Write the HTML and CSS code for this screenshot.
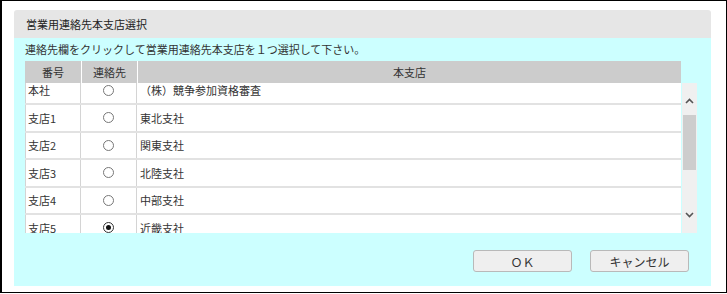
FILE: index.html
```html
<!DOCTYPE html>
<html lang="ja">

<head>
    <meta charset="UTF-8">
    <title>営業用連絡先本支店選択</title>
    <link rel="stylesheet" href="styles.css">
</head>

<body>
    <div class="frame">
        <div class="dialog">
            <div class="dialog-title">営業用連絡先本支店選択</div>
            <div class="dialog-body">
                <p class="hint">連絡先欄をクリックして営業用連絡先本支店を１つ選択して下さい。</p>

                <div class="grid-head">
                    <div class="c-no">番号</div>
                    <div class="c-sel">連絡先</div>
                    <div class="c-name">本支店</div>
                </div>

                <div class="grid-body">
                    <div class="grid-rows">
                        <div class="grid-scroll">
                            <div class="row">
                                <div class="c-no">本社</div>
                                <div class="c-sel"><span class="radio"></span></div>
                                <div class="c-name">（株）競争参加資格審査</div>
                            </div>
                            <div class="row">
                                <div class="c-no">支店1</div>
                                <div class="c-sel"><span class="radio"></span></div>
                                <div class="c-name">東北支社</div>
                            </div>
                            <div class="row">
                                <div class="c-no">支店2</div>
                                <div class="c-sel"><span class="radio"></span></div>
                                <div class="c-name">関東支社</div>
                            </div>
                            <div class="row">
                                <div class="c-no">支店3</div>
                                <div class="c-sel"><span class="radio"></span></div>
                                <div class="c-name">北陸支社</div>
                            </div>
                            <div class="row">
                                <div class="c-no">支店4</div>
                                <div class="c-sel"><span class="radio"></span></div>
                                <div class="c-name">中部支社</div>
                            </div>
                            <div class="row">
                                <div class="c-no">支店5</div>
                                <div class="c-sel"><span class="radio checked"></span></div>
                                <div class="c-name">近畿支社</div>
                            </div>
                            <div class="row">
                                <div class="c-no">支店6</div>
                                <div class="c-sel"><span class="radio"></span></div>
                                <div class="c-name">中国支社</div>
                            </div>
                        </div>
                    </div>
                    <div class="scrollbar">
                        <span class="sb-btn sb-up">
                            <svg width="9" height="6" viewBox="0 0 9 6"><path d="M1 5 L4.5 1.5 L8 5" fill="none" stroke="#555" stroke-width="1.6"/></svg>
                        </span>
                        <span class="sb-thumb"></span>
                        <span class="sb-track"></span>
                        <span class="sb-btn sb-down">
                            <svg width="9" height="6" viewBox="0 0 9 6"><path d="M1 1 L4.5 4.5 L8 1" fill="none" stroke="#555" stroke-width="1.6"/></svg>
                        </span>
                    </div>
                </div>

                <div class="actions">
                    <button class="btn">ＯＫ</button>
                    <button class="btn">キャンセル</button>
                </div>
            </div>
        </div>
    </div>
</body>

</html>
```

FILE: styles.css
```css
body {
    margin: 0;
    font-family: "Noto Sans CJK JP", "Noto Sans", sans-serif;
    font-size: 11px;
    color: #333;
    background-color: white;
}

.frame {
    width: 727px;
    height: 293px;
    box-sizing: border-box;
    border: 1px solid #000;
    border-left-width: 2px;
    padding-top: 9px;
}

.dialog {
    margin: 0 15px 0 12px;
}

.dialog-title {
    height: 28px;
    line-height: 28px;
    padding-left: 12px;
    background-color: #e6e6e6;
    border-radius: 3px 3px 0 0;
    color: #222;
}

.dialog-body {
    background-color: #ccffff;
    padding: 0 13px 14px 11px;
}

.hint {
    margin: 0;
    height: 23px;
    line-height: 23px;
    color: #333;
}

/* list header + rows share the same columns */
.grid-head,
.row {
    display: flex;
    width: 656px;
}

.c-no {
    width: 56px;
    flex: none;
    border-right: 1px solid #fff;
}

.c-sel {
    width: 55px;
    flex: none;
    border-right: 1px solid #fff;
}

.c-name {
    flex: 1;
}

.grid-head {
    height: 22px;
    line-height: 22px;
    background-color: #cccccc;
    text-align: center;
    color: #333;
}

.grid-body {
    display: flex;
    height: 150px;
}

.grid-rows {
    width: 656px;
    overflow: hidden;
    background-color: white;
    box-shadow: inset 1px 0 0 #d4d4d4;
}

.grid-scroll {
    margin-top: -5.5px;
}

.row {
    height: 27.5px;
    box-sizing: border-box;
    border-bottom: 2px solid #e2e2e2;
    align-items: center;
}

.row .c-no,
.row .c-sel {
    height: 100%;
    display: flex;
    align-items: center;
    border-right-color: #d4d4d4;
}

.row .c-no {
    padding-left: 3px;
    box-sizing: border-box;
}

.row .c-sel {
    justify-content: center;
}

.row .c-name {
    padding-left: 3px;
}

.radio {
    width: 11px;
    height: 11px;
    box-sizing: border-box;
    border: 1px solid #777;
    border-radius: 50%;
    background-color: white;
    display: flex;
    align-items: center;
    justify-content: center;
}

.radio.checked {
    border-color: #333;
}

.radio.checked::after {
    content: "";
    width: 5px;
    height: 5px;
    border-radius: 50%;
    background-color: #111;
}

.scrollbar {
    width: 15px;
    margin-left: 1px;
    background-color: #f0f0f0;
    display: flex;
    flex-direction: column;
    align-items: center;
}

.sb-btn {
    display: flex;
    justify-content: center;
    width: 100%;
}

.sb-up {
    height: 32px;
    padding-top: 15px;
    box-sizing: border-box;
}

.sb-down {
    height: 28px;
    padding-top: 7px;
    box-sizing: border-box;
}

.sb-thumb {
    width: 13px;
    height: 55px;
    background-color: #cdcdcd;
}

.sb-track {
    flex: 1;
}

.actions {
    display: flex;
    justify-content: flex-end;
    gap: 18px;
    margin-top: 17px;
    padding-right: 9px;
}

.btn {
    width: 99px;
    height: 22px;
    padding: 0;
    font-family: "Noto Sans CJK JP", "Noto Sans", sans-serif;
    font-size: 12px;
    color: #333;
    background-color: #efefef;
    border: 1px solid #b9b9b9;
    border-radius: 3px;
}
```
